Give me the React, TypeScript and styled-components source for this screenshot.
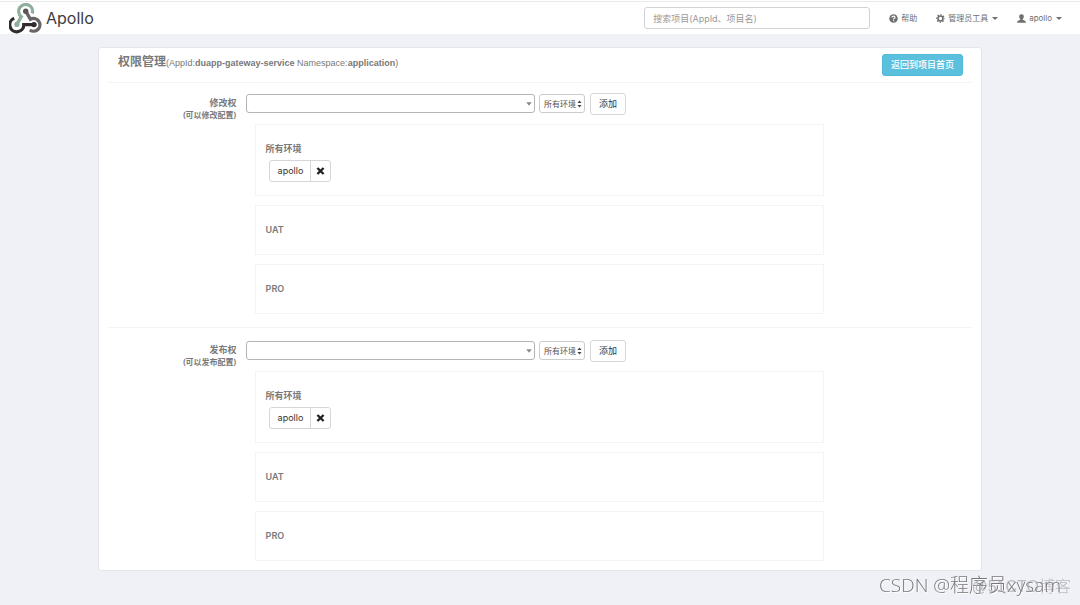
import React from "react";
import styled, { createGlobalStyle } from "styled-components";

const GlobalStyle = createGlobalStyle`
  *, *::before, *::after { box-sizing: border-box; }
  body {
    margin: 0;
    background: #f0f1f6;
    color: #797979;
    font-family: Inter, "Noto Sans CJK SC", sans-serif;
    font-size: 9px;
    line-height: 12px;
  }
  button, input, select { font: inherit; margin: 0; }
`;

const Navbar = styled.header`
  display: flex;
  align-items: center;
  justify-content: space-between;
  height: 34px;
  padding: 2px 18px 0 9px;
  background: #fff;
  box-shadow: inset 0 1px #fff, inset 0 2px #e9e9eb;
`;

const Brand = styled.a`
  display: flex;
  align-items: center;
  gap: 4px;
  color: #3c3c3e;
  font-family: Inter, sans-serif;
  font-size: 16px;
  line-height: 30px;
  text-decoration: none;
`;

const NavRight = styled.nav`
  display: flex;
  align-items: center;
  gap: 19px;
`;

const Search = styled.input`
  width: 226px;
  height: 22px;
  padding: 0 8px;
  border: 1px solid #d2d2d4;
  border-radius: 3px;
  background: #fff;
  color: #555;
  &::placeholder { color: #999; opacity: 1; }
`;

const NavLink = styled.a`
  display: flex;
  align-items: center;
  gap: 3px;
  color: #6f6f6f;
  font-size: 8px;
  text-decoration: none;
`;

const Caret = styled.span`
  margin-left: 1px;
  border-top: 3px solid #6f6f6f;
  border-left: 3px solid transparent;
  border-right: 3px solid transparent;
`;

const Main = styled.main`
  padding: 13px 98px 33px;
`;

const Panel = styled.section`
  padding: 0 9px 9px;
  border: 1px solid #e6e6ea;
  border-radius: 3px;
  background: #fff;
`;

const PanelHeader = styled.header`
  display: flex;
  align-items: center;
  justify-content: space-between;
  height: 35px;
  padding: 0 9px 0 10px;
  border-bottom: 1px solid #f4f4f5;
`;

const Title = styled.h1`
  margin: 0;
  padding-bottom: 5px;
  font-family: "Liberation Sans", "Noto Sans CJK SC", sans-serif;
  font-size: 9px;
  font-weight: 400;
  line-height: 18px;
  color: #797979;
`;

const TitleName = styled.span`
  font-size: 12px;
  font-weight: 700;
`;

const Strong = styled.b`
  font-weight: 700;
`;

const PrimaryButton = styled.button`
  height: 22px;
  padding: 0 8px;
  border: 1px solid #51b9d8;
  border-radius: 3px;
  background: #5bc0de;
  color: #fff;
  font-weight: 500;
`;

const PermissionForm = styled.form`
  display: grid;
  grid-template-columns: 15% 67%;
  column-gap: 8px;
  padding: 10px 0 13px;
  & + & {
    padding-bottom: 0;
    border-top: 1px solid #f4f4f5;
    padding-top: 12px;
  }
`;

const Label = styled.label`
  padding: 4px 1px 0 0;
  text-align: right;
  font-weight: 600;
`;

const Hint = styled.small`
  display: block;
  font-size: 8px;
`;

const Controls = styled.div`
  display: flex;
  align-items: center;
  height: 22px;
`;

const SelectWrap = styled.div<{ $width: string; $edge: string }>`
  position: relative;
  width: ${(p) => p.$width};
  height: 19px;
  margin: 0 4px 1px 0;
  select {
    display: block;
    appearance: none;
    width: 100%;
    height: 100%;
    padding: 0 4px;
    border: 1px solid ${(p) => p.$edge};
    border-radius: 3px;
    background: #fff;
    color: #555;
    font-size: 8px;
  }
  svg {
    position: absolute;
    top: 0;
    bottom: 0;
    right: 3px;
    margin: auto 0;
    pointer-events: none;
  }
`;

const Button = styled.button`
  height: 22px;
  margin-left: 1px;
  padding: 0 8px;
  border: 1px solid #d6d6d6;
  border-radius: 3px;
  background: #fff;
  color: #333;
`;

const Environments = styled.div`
  display: flex;
  flex-direction: column;
  gap: 9px;
  padding: 9px 0 0 9px;
`;

const Environment = styled.section`
  padding: 18px 10px 13px;
  min-height: 50px;
  border: 1px solid #f4f4f8;
`;

const EnvironmentName = styled.h2`
  margin: 0;
  font-size: 9px;
  font-weight: 600;
  line-height: 12px;
`;

const Members = styled.div`
  display: flex;
  padding: 5px 3px 0;
`;

const Member = styled.div`
  display: flex;
  height: 22px;
  border: 1px solid #d6d6d6;
  border-radius: 3px;
  color: #333;
`;

const MemberName = styled.span`
  padding: 0 7px 0 8px;
  line-height: 20px;
`;

const RemoveButton = styled.button`
  display: flex;
  align-items: center;
  justify-content: center;
  width: 20px;
  padding: 0;
  border: 0;
  border-left: 1px solid #d6d6d6;
  background: none;
`;

const Watermark = styled.div`
  position: fixed;
  right: 19px;
  bottom: 8px;
  color: #77777a;
  font-family: "Open Sans", "Noto Sans CJK SC", sans-serif;
  font-size: 19px;
  font-weight: 300;
  line-height: 24px;
  white-space: nowrap;
  text-shadow: 1px 1px #fff;
  pointer-events: none;
`;

const FaintWatermark = styled(Watermark)`
  right: 9px;
  bottom: 6px;
  color: rgba(150, 150, 155, 0.6);
  font-family: "Liberation Sans", "Noto Sans CJK SC", sans-serif;
  font-size: 16px;
  text-shadow: none;
`;

const Logo = () => (
  <svg width="33" height="31" viewBox="0 0 33 31" fill="none" aria-hidden="true">
    <path d="M7.7 21.6L12.3 13.7A6.9 6.9 0 1 1 23.2 10.4" stroke="#8fae9c" strokeWidth="3.3" />
    <circle cx="7.9" cy="21.4" r="2.6" fill="#8fae9c" />
    <path d="M25 21.6H14.8A7 7 0 1 1 5.2 15.3" stroke="#302c2d" strokeWidth="3.3" />
    <circle cx="25" cy="21.6" r="2.7" fill="#302c2d" />
    <path d="M16.7 8.2L21.4 16.2A6.4 6.4 0 1 1 20.8 27" stroke="#696465" strokeWidth="3.3" />
    <circle cx="16.7" cy="8.2" r="2.7" fill="#5a5556" />
  </svg>
);

const HelpIcon = () => (
  <svg width="9" height="9" viewBox="0 0 18 18" aria-hidden="true">
    <circle cx="9" cy="9" r="8.5" fill="#6f6f6f" />
    <path d="M6 7Q6 4.3 9 4.3T12 7Q12 8.4 10.2 9.2Q9.1 9.7 9.1 11" fill="none" stroke="#fff" strokeWidth="2.2" />
    <path d="M8 12.3h2.3v2.2H8z" fill="#fff" />
  </svg>
);

const GearIcon = () => (
  <svg width="9" height="9" viewBox="0 0 18 18" fill="none" stroke="#6f6f6f" aria-hidden="true">
    <circle cx="9" cy="9" r="4.9" strokeWidth="3.2" />
    <circle cx="9" cy="9" r="7.4" strokeWidth="2.6" strokeDasharray="2.9 2.91" strokeDashoffset="1.45" />
  </svg>
);

const UserIcon = () => (
  <svg width="9" height="9" viewBox="0 0 18 18" fill="#6f6f6f" aria-hidden="true">
    <path d="M9 0.5C11.9 0.5 13.6 2.2 13.6 5C13.6 7.4 12.6 9.2 11.4 10.2V11.4L16 13.4Q17.8 14.4 17.8 17.5H0.2Q0.2 14.4 2 13.4L6.6 11.4V10.2C5.4 9.2 4.4 7.4 4.4 5C4.4 2.2 6.1 0.5 9 0.5Z" />
  </svg>
);

const DownIcon = () => (
  <svg width="6" height="4" viewBox="0 0 6 4" aria-hidden="true">
    <path d="M0.3 0.2H5.7L3 3.8Z" fill="#888" />
  </svg>
);

const UpDownIcon = () => (
  <svg width="5" height="8" viewBox="0 0 5 8" aria-hidden="true">
    <path d="M0.4 3.1L2.5 0.4L4.6 3.1ZM0.4 4.9H4.6L2.5 7.6Z" fill="#444" />
  </svg>
);

const RemoveIcon = () => (
  <svg width="9" height="8" viewBox="0 0 9 8" aria-hidden="true">
    <path d="M1.4 1L7.6 7M7.6 1L1.4 7" stroke="#222" strokeWidth="2.4" />
  </svg>
);

const environments = [
  { name: "所有环境", members: ["apollo"] },
  { name: "UAT", members: [] as string[] },
  { name: "PRO", members: [] as string[] },
];

function Permission({ id, name, hint }: { id: string; name: string; hint: string }) {
  return (
    <PermissionForm onSubmit={(e) => e.preventDefault()}>
      <Label htmlFor={id}>
        {name}
        <Hint>{hint}</Hint>
      </Label>
      <div>
        <Controls>
          <SelectWrap $width="50%" $edge="#b4b4b4">
            <select id={id}>
              <option value="" />
              <option>apollo</option>
            </select>
            <DownIcon />
          </SelectWrap>
          <SelectWrap $width="46px" $edge="#ccc">
            <select aria-label="环境">
              {environments.map((env) => (
                <option key={env.name}>{env.name}</option>
              ))}
            </select>
            <UpDownIcon />
          </SelectWrap>
          <Button type="submit">添加</Button>
        </Controls>
        <Environments>
          {environments.map((env) => (
            <Environment key={env.name}>
              <EnvironmentName>{env.name}</EnvironmentName>
              {env.members.length > 0 && (
                <Members>
                  {env.members.map((member) => (
                    <Member key={member}>
                      <MemberName>{member}</MemberName>
                      <RemoveButton type="button" aria-label="删除">
                        <RemoveIcon />
                      </RemoveButton>
                    </Member>
                  ))}
                </Members>
              )}
            </Environment>
          ))}
        </Environments>
      </div>
    </PermissionForm>
  );
}

export default function App() {
  return (
    <>
      <GlobalStyle />
      <Navbar>
        <Brand href="#">
          <Logo />
          Apollo
        </Brand>
        <NavRight>
          <Search type="text" aria-label="搜索项目" placeholder="搜索项目(AppId、项目名)" />
          <NavLink href="#"><HelpIcon />帮助</NavLink>
          <NavLink href="#"><GearIcon />管理员工具<Caret /></NavLink>
          <NavLink href="#"><UserIcon />apollo<Caret /></NavLink>
        </NavRight>
      </Navbar>
      <Main>
        <Panel>
          <PanelHeader>
            <Title>
              <TitleName>权限管理</TitleName>
              (AppId:<Strong>duapp-gateway-service</Strong> Namespace:<Strong>application</Strong>)
            </Title>
            <PrimaryButton type="button">返回到项目首页</PrimaryButton>
          </PanelHeader>
          <Permission id="modify-role" name="修改权" hint="(可以修改配置)" />
          <Permission id="release-role" name="发布权" hint="(可以发布配置)" />
        </Panel>
      </Main>
      <Watermark>CSDN @程序员xysam</Watermark>
      <FaintWatermark>@51CTO博客</FaintWatermark>
    </>
  );
}
